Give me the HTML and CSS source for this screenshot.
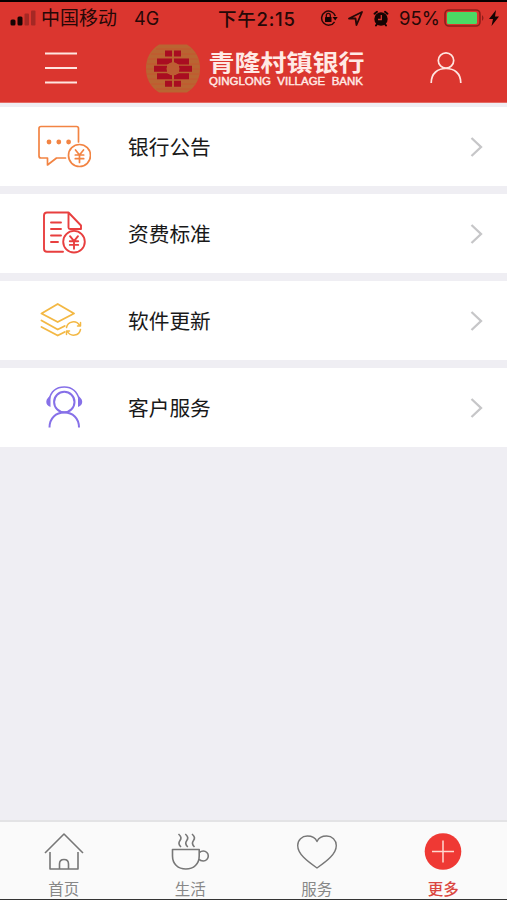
FILE: index.html
```html
<!DOCTYPE html>
<html lang="zh-CN">
<head>
<meta charset="utf-8">
<title>青隆村镇银行</title>
<link rel="stylesheet" href="styles.css">
</head>
<body>
<div class="app">
  <header class="top">
    <div class="status">
      <svg class="signal" width="27" height="16" viewBox="0 0 27 16"><rect x="0.5" y="9.500" width="5" height="6" rx="1.5"/><rect x="7.500" y="6.500" width="5" height="9" rx="1.5"/><g fill="#a52824"><rect x="14.500" y="3.500" width="4.500" height="12" rx="1"/><rect x="21" y="0.5" width="4.500" height="15" rx="1"/></g></svg>
      <span class="carrier">中国移动</span>
      <span class="network">4G</span>
      <span class="time">下午2:15</span>
      <svg class="lock" width="18" height="16" viewBox="0 0 18 16"><path d="M14.600 11.800A7 7 0 1 1 15.300 6" fill="none" stroke="#260807" stroke-width="1.500"/><path d="M12.500 7h5.200l-2.500 3.500z"/><rect x="5" y="7" width="6.500" height="5" rx=".5"/><path d="M6.300 7V5.400a2 2 0 0 1 4 0V7" fill="none" stroke="#260807" stroke-width="1.300"/></svg>
      <svg class="locate" width="15" height="15" viewBox="0 0 15 15"><path d="M1 7.500L14 1 8.500 14 7.500 7.500z" fill="none" stroke="#260807" stroke-width="1.800" stroke-linejoin="round"/></svg>
      <svg class="alarm" width="16" height="17" viewBox="0 0 16 17"><circle cx="8" cy="9" r="6.700"/><path d="M1.500 3.700L4 1.800M14.500 3.700L12 1.800M4 14l-1 1.500M12 14l1 1.500" stroke="#160403" stroke-width="2" stroke-linecap="round"/><path d="M8.300 5v4.500H5" fill="none" stroke="#db362f" stroke-width="1.300"/></svg>
      <span class="percent">95%</span>
      <svg class="battery" width="41" height="18" viewBox="0 0 41 18"><rect x="1" y="1" width="35" height="16" rx="4" fill="none" stroke="#8f1e1a" stroke-width="1.600"/><rect x="3" y="3" width="30" height="12" rx="1.500" fill="#4bda64"/><path d="M38 6q3 3 0 6z" fill="#8f1e1a"/></svg>
      <svg class="bolt" width="10" height="16" viewBox="0 0 10 16"><path d="M7 0L0 9h4L2.500 16 10 6.500H6z"/></svg>
    </div>
    <div class="nav">
      <svg class="menu" width="32" height="34" viewBox="0 0 32 34" fill="none" stroke="#ffe5e0" stroke-width="1.800"><path d="M0 2.500h32M0 17h32M0 31.500h32"/></svg>
      <svg class="logo" width="220" height="52" viewBox="0 0 220 52">
        <path d="M13 1.500h28Q54 10 54 25.500T41 49.500H13Q0 41 0 25.500T13 1.500z" fill="#b96532"/>
        <path d="M10 6h35M5 11h45M2 16h50M1 21h53M0 26h54M1 31h53M2 36h50M5 41h45M10 46h35" stroke="#c4562f" stroke-width="1"/>
        <path fill="#a90d21" d="M19 7.500h7v6h-7zM28 7.500h7v6h-7zM11 15.500h15v4l-5 2H11zM28 15.500h15v6H33l-5-2zM8 22.800h13v6H8zM33 22.800h13v6H33zM11 30.300h10l5 2v4H11zM33 30.300h10v6H28v-4zM19 37.800h7v6h-7zM28 37.800h7v6h-7z"/>
        <circle cx="27" cy="25.800" r="6.500" fill="#bd5d33"/>
        <text class="logo-cn" x="62.500" y="27.500" textLength="156" lengthAdjust="spacingAndGlyphs">青隆村镇银行</text>
        <text class="logo-en" x="63" y="41.500" textLength="154" lengthAdjust="spacingAndGlyphs">QINGLONG&#160; VILLAGE&#160; BANK</text>
      </svg>
      <svg class="user" width="32" height="33" viewBox="0 0 32 33" fill="none" stroke="#ffe5e0" stroke-width="1.700"><circle cx="16" cy="9.500" r="7.700"/><path d="M1.200 32C1.200 22 8 17.500 16 17.500S30.800 22 30.800 32"/></svg>
    </div>
  </header>
  <main class="list">
    <a class="row">
      <span class="row-icon"><svg width="56" height="50" viewBox="0 0 56 50" fill="none" stroke="#f28443" stroke-width="1.700" stroke-linejoin="round" stroke-linecap="round"><path d="M43.500 20V6.500q0-2-2-2H6q-2 0-2 2V34q0 2 2 2h6.500v7l9-7h9"/><g fill="#f28443" stroke="none"><circle cx="14" cy="20" r="2.400"/><circle cx="23.800" cy="20" r="2.400"/><circle cx="33.600" cy="20" r="2.400"/></g><circle cx="44.500" cy="33.500" r="11"/><path d="M40.500 28l4 5 4-5M44.500 33v7.500M40.300 33h8.400M40.300 36.700h8.400"/></svg></span>
      <span class="label">银行公告</span>
      <svg class="chevron" width="14" height="20" viewBox="0 0 14 20"><path d="M1.500 1l9.500 9-9.500 9"/></svg>
    </a>
    <a class="row">
      <span class="row-icon"><svg width="56" height="50" viewBox="0 0 56 50" fill="none" stroke="#e83f3f" stroke-width="1.900" stroke-linejoin="round" stroke-linecap="round"><path d="M28 42.700H12q-3 0-3-3V6.500q0-3 3-3h21.500L46 16.500V20H35q-1.500 0-1.500-1.500V3.500M16 13.500h10M16 20h10M16 26.500h10M16 33h7"/><circle cx="39" cy="32.700" r="10.800"/><path d="M35 27.200l4 5 4-5M39 32.200v7.500M34.800 32.200h8.400M34.800 35.900h8.400"/></svg></span>
      <span class="label">资费标准</span>
      <svg class="chevron" width="14" height="20" viewBox="0 0 14 20"><path d="M1.500 1l9.500 9-9.500 9"/></svg>
    </a>
    <a class="row">
      <span class="row-icon"><svg width="56" height="50" viewBox="0 0 56 50" fill="none" stroke="#f3b844" stroke-width="1.900" stroke-linejoin="round" stroke-linecap="round"><path d="M22.700 8L6.500 17.500l16.200 8.500L39 17.500z"/><path d="M6.500 24.500L22.700 33.500l7-3.500M6.500 31L22.700 39.500l7-3.500"/><path d="M31.500 31.500a7 7 0 0 1 13-2M45.500 26.500v3.500h-3M45.500 33.500a7 7 0 0 1-13 2M31.500 38.500V35h3" stroke-width="1.500"/></svg></span>
      <span class="label">软件更新</span>
      <svg class="chevron" width="14" height="20" viewBox="0 0 14 20"><path d="M1.500 1l9.500 9-9.500 9"/></svg>
    </a>
    <a class="row">
      <span class="row-icon"><svg width="56" height="50" viewBox="0 0 56 50" fill="none" stroke="#8670e8" stroke-width="2"><path d="M14 17C16 8 22 4 29.300 4S42 8 44.500 17" stroke-width="1.600"/><circle cx="29.300" cy="19" r="10.200"/><path d="M14.500 44.500C14.500 35 21 29.500 29.300 29.500S44 35 44 44.500"/><path d="M15.500 13v11Q11 22 11.300 18.500T15.500 13zM43 13v11q4.500-2 4.200-5.500T43 13z" fill="#8670e8" stroke="none"/></svg></span>
      <span class="label">客户服务</span>
      <svg class="chevron" width="14" height="20" viewBox="0 0 14 20"><path d="M1.500 1l9.500 9-9.500 9"/></svg>
    </a>
  </main>
  <nav class="tabs">
    <a class="tab"><svg width="44" height="44" viewBox="0 0 44 44"><path d="M3 23L22 4l19 19M8 22v17h28V22M17.500 39v-5q0-4.500 4.500-4.500t4.500 4.500v5"/></svg><span>首页</span></a>
    <a class="tab"><svg width="44" height="44" viewBox="0 0 44 44"><path d="M4.500 19.500h26.700V26c0 8-5.500 13-13.300 13S4.500 34 4.500 26zM31.300 22.500q2-1.500 4-1.500a5 5 0 0 1 0 10q-3 0-4.500-2"/><path d="M10.500 4q4 3.300 1.500 6.500t1 6.500M17.300 4q4 3.300 1.500 6.500t1 6.500M24 4q4 3.300 1.500 6.500t1 6.500"/></svg><span>生活</span></a>
    <a class="tab"><svg width="44" height="44" viewBox="0 0 44 44"><path d="M22 38C12 31 2.700 24 2.700 15.500C2.700 10 7 6 12.300 6C17 6 20.500 8 22 11.500C23.500 8 27 6 31.700 6C37 6 41.300 10 41.300 15.500C41.300 24 32 31 22 38z" stroke-width="1.400"/></svg><span>服务</span></a>
    <a class="tab active"><svg width="44" height="44" viewBox="0 0 44 44"><circle cx="22" cy="21.500" r="18.300" fill="#ef3934" stroke="none"/><path d="M11 21.500h22M22 10.500v22" stroke="#ffd9cf" stroke-width="1.500"/></svg><span>更多</span></a>
  </nav>
</div>
</body>
</html>
```
FILE: styles.css
```css
* { box-sizing: border-box; }
body { margin: 0; font-family: "Liberation Sans", "Noto Sans CJK SC", sans-serif; }
svg { display: block; flex: none; }
.app {
  width: 507px;
  height: 900px;
  display: flex;
  flex-direction: column;
  background: #efeef3;
  border-top: 2px solid #050000;
  border-bottom: 1px solid #343434;
  overflow: hidden;
}
.top { height: 101px; background: #db362f; border-bottom: 1px solid #e56a64; flex: none; }
.status {
  height: 32px;
  display: flex;
  align-items: center;
  padding-left: 10px;
  color: #260807;
  fill: #160403;
  font: 18px/32px Inter, "Noto Sans CJK SC", sans-serif;
  white-space: nowrap;
}
.status span { flex: none; padding-top: 1px; }
.signal { margin-right: 4px; }
.carrier { width: 93px; font-size: 19px; }
.network { width: 84px; }
.time { width: 102px; font-size: 18.5px; font-weight: 500; letter-spacing: 0.75px; }
.lock { margin-right: 10px; }
.locate { margin-right: 10px; }
.alarm { margin-right: 10px; }
.status .percent { width: 45px; font-size: 18.5px; padding-top: 0; }
.battery { margin-right: 4px; }
.nav { height: 66px; display: flex; align-items: center; padding: 1px 46px 0 45px; }
.logo { margin: 3px 64px 0 69px; fill: #ffeae5; }
.logo-cn { font: 700 22.5px "Noto Sans CJK SC", sans-serif; }
.logo-en { font: 400 10px "Liberation Sans", sans-serif; stroke: #ffeae5; stroke-width: 0.4px; }
.list { flex: 1; display: flex; flex-direction: column; gap: 8px; padding-top: 4px; }
.row { height: 79px; display: flex; align-items: center; background: #fff; padding: 0 23px 0 35px; }
.row-icon { width: 93px; }
.label { flex: 1; padding-bottom: 2px; font: 20.7px/30px "Noto Sans CJK SC", sans-serif; color: #191919; }
.chevron { fill: none; stroke: #c6c6c8; stroke-width: 2.3; }
.tabs { height: 79px; flex: none; display: flex; background: #fafafa; border-top: 2px solid #e3e3e5; padding-left: 0.5px; }
.tab { width: 126.500px; display: flex; flex-direction: column; align-items: center; padding-top: 8px; color: #878787; font: 15.500px/20px "Noto Sans CJK SC", sans-serif; }
.tab svg { fill: none; stroke: #777; stroke-width: 1.600; stroke-linejoin: round; }
.tab span { margin-top: 3.5px; }
.active { color: #da4640; font-weight: 500; }
```
